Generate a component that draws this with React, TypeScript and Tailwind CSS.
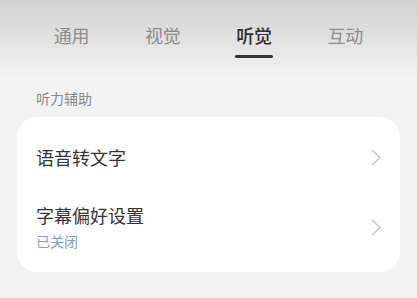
import React from "react"

const tabs = ["通用", "视觉", "听觉", "互动"]

function Chevron() {
  return (
    <svg width="11" height="17" viewBox="0 0 11 17" fill="none">
      <path d="M1.5 1.5 L9 8.5 L1.5 15.5" stroke="#c6c6c6" strokeWidth="1.6" strokeLinecap="round" strokeLinejoin="round" />
    </svg>
  )
}

export default function App() {
  return (
    <div
      className="min-h-screen w-full bg-[#f2f2f2] text-[#333333]"
      style={{ fontFamily: '"Noto Sans CJK SC", "Noto Sans", sans-serif' }}
    >
      {/* Tabs */}
      <div className="h-[75px] bg-gradient-to-b from-[#d2d2d2] to-[#f1f1f1] px-[26px] pt-[23px]">
        <div className="flex">
          {tabs.map((t) => {
            const active = t === "听觉"
            return (
              <div key={t} className="flex flex-1 flex-col items-center">
                <span
                  className={
                    active
                      ? "text-[18px] leading-[24px] font-medium text-[#2e2e2e]"
                      : "text-[18px] leading-[24px] text-[#8d8d8d]"
                  }
                >
                  {t}
                </span>
                {active && <div className="mt-[8px] h-[3px] w-[38px] rounded-full bg-[#333333]" />}
              </div>
            )
          })}
        </div>
      </div>

      {/* Section */}
      <div className="pl-[36px] pt-[13px] text-[14px] leading-[20px] text-[#8a8a8a]">听力辅助</div>

      <div className="mx-[17px] mt-[9px] rounded-[20px] bg-white pb-[21px]">
        <div className="flex h-[80px] items-center justify-between pl-[19px] pr-[18px]">
          <span className="text-[18px] leading-[24px]">语音转文字</span>
          <Chevron />
        </div>
        <div className="flex items-center justify-between pl-[19px] pr-[18px] pt-[6px]">
          <div className="flex flex-col">
            <span className="text-[18px] leading-[24px]">字幕偏好设置</span>
            <span className="mt-[4px] text-[14px] leading-[20px] text-[#7d9ccc]">已关闭</span>
          </div>
          <Chevron />
        </div>
      </div>
    </div>
  )
}
